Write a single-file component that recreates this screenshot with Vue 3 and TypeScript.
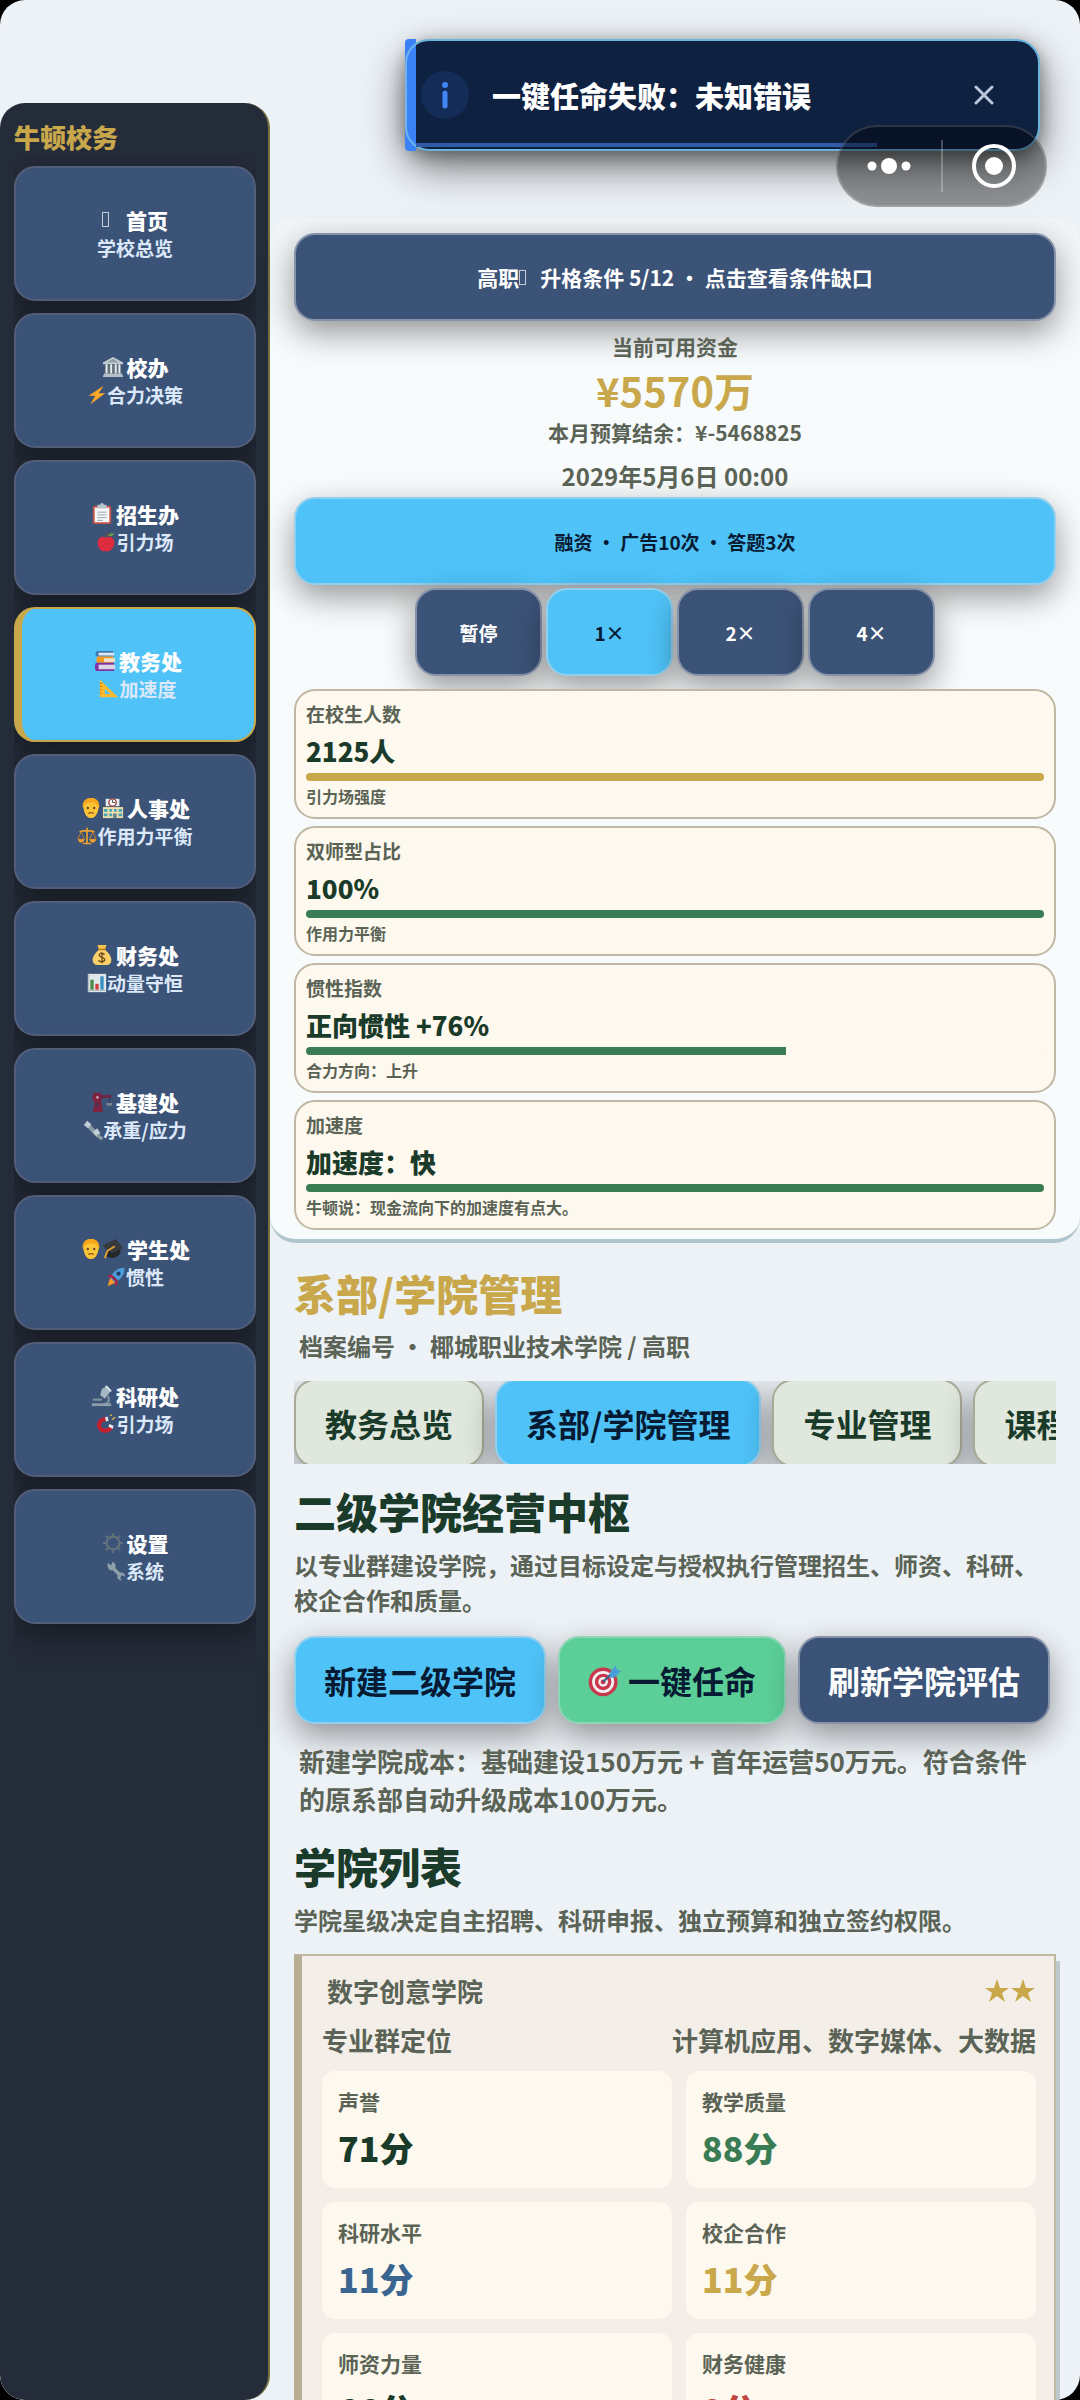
<script setup lang="ts">
import { ref } from 'vue'

interface NavItem {
  name: string
  hint: string
  icons: string[]
  hintIcon?: string
}
interface StatCard {
  label: string
  value: string
  note: string
  percent: number
  tone: string
}
interface Metric {
  label: string
  value: string
  tone: string
}

const person =
  '<path d="M3 10C3 4 7 1 12 1s9 3 9 9l-1 3c-1 6-4 10-8 10S5 19 4 13z" fill="#fcc535"/><path d="M3 10C3 4 7 1 12 1s9 3 9 9l-1 2c0-4-3-6-8-6s-8 2-8 6z" fill="#f7a61c"/><circle cx="8.500" cy="12" r="1.300" fill="#6b4523"/><circle cx="15.500" cy="12" r="1.300" fill="#6b4523"/><path d="M9 18q3-2 6 0" stroke="#8d5523" stroke-width="1.500" fill="none"/>'

const glyphs: Record<string, string> = {
  bank: '<path d="M12 1 23 7v2H1V7z" fill="#c3cdd1"/><path d="M12 3 19 7H5z" fill="#8fa0a8"/><path d="M3 9h18v10H3z" fill="#62737b"/><path d="M4 9h2v10H4zM9 9h2v10H9zM14 9h2v10h-2zM18 9h2v10h-2z" fill="#e8eef0"/><path d="M2 19h20v2H2zM1 21h22v2H1z" fill="#b4c0c5"/>',
  bolt: '<path d="M20 1 2 13h8L4 23 22 10h-8z" fill="#fda828"/>',
  clipboard:
    '<rect x="2" y="3" width="20" height="20" rx="2" fill="#c4544a"/><path d="M4 5h16v16H4z" fill="#f5f7f8"/><path d="M7 2h3a2 2 0 0 1 4 0h3v4H7z" fill="#b9c6cc"/><path d="M7 10h10M7 13h10M7 16h10M7 19h6" stroke="#90a4ae"/>',
  apple:
    '<path d="M12 7c4-3 10-1 10 6 0 5-4 10-7 10-2 0-4 0-6 0C5 23 2 18 2 13 2 6 8 4 12 7z" fill="#dd2c3e"/><path d="M12 7c0-3 1-5 3-6" stroke="#6d4c41" stroke-width="1.500" fill="none"/><path d="M14 4c3-3 6-3 8-2-2 3-5 4-8 2z" fill="#6b9e3b"/>',
  books:
    '<path d="M3 1h18v6H3q-3-3 0-6z" fill="#3d79b8"/><path d="M5 3h17v3H5z" fill="#dfe8ee"/><path d="M4 7h17v7H4q-3-3 0-7z" fill="#f59a22"/><path d="M11 9h12v4H11z" fill="#f2e4cc"/><path d="M2 14h20v9H2q-2-4 0-9z" fill="#8131a2"/><path d="M5 16h18v5H5z" fill="#d9d5e4"/>',
  ruler:
    '<path d="M1 1 23 22H1zM7 12v6h7z" fill="#fcb92d" fill-rule="evenodd"/><path d="M1 5h3M1 9h3M1 13h3M1 17h3" stroke="#c27c11"/>',
  school:
    '<path d="M4 2h15v8H4z" fill="#e7eef0"/><path d="M1 11h22v12H1z" fill="#f0dfa8"/><circle cx="11.500" cy="6" r="4" fill="#fff" stroke="#963f3f" stroke-width="1.500"/><path d="M11.500 3v3h3" stroke="#444" fill="none"/><path d="M2 13h4v3H2zM8 13h3v3H8zM13 13h3v3h-3zM18 13h4v3h-4zM2 18h4v3H2zM8 18h3v3H8zM18 18h4v3h-4z" fill="#48a6b8"/><path d="M12 18h4v5h-4z" fill="#6b8290"/>',
  scales:
    '<path d="M12 2v18M3 7q9-3 18 0M7 21h10" stroke="#eda02e" stroke-width="2" fill="none"/><path d="M5 7 1 16h8zM19 7l-4 9h8z" fill="none" stroke="#d98a20"/><path d="M1 16h8q-1 4-4 4t-4-4zM15 16h8q-1 4-4 4t-4-4z" fill="#eda02e"/>',
  money:
    '<path d="M7 1h10l-2 6H9z" fill="#f5c04a"/><path d="M9 6h6c5 4 8 9 7 13-1 4-4 4-10 4S3 23 2 19C1 15 4 10 9 6z" fill="#fad06b"/><path d="M8 6h8" stroke="#b47a17" stroke-width="1.500"/><path d="M15 11q-6-2-6 1c0 3 6 2 6 5s-5 3-7 1M12 9v12" stroke="#6b4c1b" stroke-width="1.500" fill="none"/>',
  chart:
    '<rect x="1" y="1" width="22" height="22" fill="#dfe7ea"/><path d="M4 8h4v12H4z" fill="#4e8b47"/><path d="M10 13h4v7h-4z" fill="#cf3f3f"/><path d="M16 4h4v16h-4z" fill="#3390c4"/><path d="M1 21h22M2 1v22" stroke="#a5b5bb"/>',
  crane:
    '<path d="M3 2h7l3 4-2 5 2 12H2l2-10-3-5z" fill="#7e2440"/><path d="M8 5 21 4l2 3-13 1z" fill="#6e2440"/><path d="M20 7v6" stroke="#3b2c48"/><path d="M17 13h6v3h-6z" fill="#7e8590"/><path d="M5 13h4v4H5z" fill="#54314f"/><circle cx="7" cy="7" r="1.500" fill="#c9a0aa"/>',
  bolts:
    '<path d="M5 5 16 17" stroke="#8b9da5" stroke-width="5"/><path d="M1 6 5 1l5 4-4 5zM12 14l5-4 4 6-5 4z" fill="#c2cfd4"/><path d="M17 18l6 5" stroke="#8b9da5" stroke-width="4"/>',
  cap: '<path d="M1 8 15 1l8 10-12 8z" fill="#34393e"/><path d="M5 12v8q8 5 15-3v-5l-9 5z" fill="#24282c"/><path d="M14 9 6 14l-3 8" stroke="#e6a62b" stroke-width="2" fill="none"/>',
  rocket:
    '<path d="M22 1c1 8-5 14-11 18l-6-6C8 6 14 1 22 1z" fill="#4b9ddb"/><path d="M8 9 2 10l3 4zM14 16l-1 7-4-4z" fill="#b11f45"/><path d="M5 13l6 6-9 4z" fill="#f79a28"/><circle cx="15" cy="8" r="2.500" fill="#213f66"/><path d="M7 11l6 6" stroke="#952044" stroke-width="3"/>',
  microscope:
    '<path d="M12 4l6-3 4 5-7 9-5-4z" fill="#a5b8c1"/><path d="M16 1l6 6" stroke="#dbe4e8" stroke-width="2"/><path d="M18 12c4 5 0 9-5 9M2 16h10" stroke="#78909c" stroke-width="2.500" fill="none"/><path d="M1 20h21v3H1z" fill="#8da0aa"/>',
  magnet:
    '<path d="M12 6C0 7 2 20 11 20c4 0 6-2 7-4" stroke="#c4202f" stroke-width="5" fill="none"/><path d="M11 4l3-1 1 5-3 1zM15 15l1-3 5 2-1 4z" fill="#e5ecef"/><path d="M17 2l2-1M19 7l4-3" stroke="#f0bd35" stroke-width="1.500"/>',
  gear: '<circle cx="12" cy="12" r="7" fill="none" stroke="#62727b" stroke-width="2.500"/><path d="M12 1v4M12 19v4M1 12h4M19 12h4M4 4l3 3M17 17l3 3M20 4l-3 3M7 17l-3 3" stroke="#62727b" stroke-width="2"/>',
  wrench:
    '<path d="M2 2l4 3 2-4c4 2 4 5 3 7l6 6c3-1 6 1 6 5l-4-2-2 3 2 3c-5 0-6-3-5-6L8 11C4 12 1 8 2 2z" fill="#8d9fa8"/>',
  target:
    '<circle cx="11" cy="13" r="10.500" fill="#c9374c"/><circle cx="11" cy="13" r="8" fill="#f3f1f1"/><circle cx="11" cy="13" r="6" fill="#c9374c"/><circle cx="11" cy="13" r="3.500" fill="#f3f1f1"/><circle cx="11" cy="13" r="1.800" fill="#c9374c"/><path d="M11 13 19 5" stroke="#33628d" stroke-width="1.500"/><path d="M16 6l4-5 1 3 3 1-5 5h-3z" fill="#4a9ed8"/>',
  person,
}

const navItems: NavItem[] = [
  { name: '首页', hint: '学校总览', icons: [] },
  { name: '校办', hint: '合力决策', icons: ['bank'], hintIcon: 'bolt' },
  { name: '招生办', hint: '引力场', icons: ['clipboard'], hintIcon: 'apple' },
  { name: '教务处', hint: '加速度', icons: ['books'], hintIcon: 'ruler' },
  { name: '人事处', hint: '作用力平衡', icons: ['person', 'school'], hintIcon: 'scales' },
  { name: '财务处', hint: '动量守恒', icons: ['money'], hintIcon: 'chart' },
  { name: '基建处', hint: '承重/应力', icons: ['crane'], hintIcon: 'bolts' },
  { name: '学生处', hint: '惯性', icons: ['person', 'cap'], hintIcon: 'rocket' },
  { name: '科研处', hint: '引力场', icons: ['microscope'], hintIcon: 'magnet' },
  { name: '设置', hint: '系统', icons: ['gear'], hintIcon: 'wrench' },
]
const activeNav = ref(3)

const speeds = ['暂停', '1×', '2×', '4×']
const speed = ref(1)

const stats: StatCard[] = [
  { label: '在校生人数', value: '2125人', note: '引力场强度', percent: 100, tone: 'gold' },
  { label: '双师型占比', value: '100%', note: '作用力平衡', percent: 100, tone: 'green' },
  { label: '惯性指数', value: '正向惯性 +76%', note: '合力方向：上升', percent: 65, tone: 'green' },
  { label: '加速度', value: '加速度：快', note: '牛顿说：现金流向下的加速度有点大。', percent: 100, tone: 'green' },
]

const tabs = ['教务总览', '系部/学院管理', '专业管理', '课程管理']
const activeTab = ref(1)

const metrics: Metric[] = [
  { label: '声誉', value: '71分', tone: 'dark' },
  { label: '教学质量', value: '88分', tone: 'green' },
  { label: '科研水平', value: '11分', tone: 'blue' },
  { label: '校企合作', value: '11分', tone: 'gold' },
  { label: '师资力量', value: '66分', tone: 'dark' },
  { label: '财务健康', value: '0分', tone: 'red' },
]

const toastOpen = ref(true)
</script>

<template>
  <div class="app">
    <aside class="sidebar">
      <h1 class="brand">牛顿校务</h1>
      <nav class="nav">
        <button
          v-for="(item, i) in navItems"
          :key="item.name"
          type="button"
          class="nav-btn"
          :class="{ active: i === activeNav }"
          @click="activeNav = i"
        >
          <span class="nav-name">
            <i v-if="!item.icons.length" class="missing"></i>
            <svg v-for="g in item.icons" :key="g" class="emoji" viewBox="0 0 24 24" v-html="glyphs[g]"></svg>
            <span class="nav-label">{{ item.name }}</span>
          </span>
          <span class="nav-hint">
            <svg v-if="item.hintIcon" class="emoji small" viewBox="0 0 24 24" v-html="glyphs[item.hintIcon]"></svg>
            <span>{{ item.hint }}</span>
          </span>
        </button>
      </nav>
    </aside>

    <main class="main">
      <header class="panel">
        <button type="button" class="btn navy wide-btn upgrade">
          <span>高职</span><i class="missing"></i><span>升格条件 5/12 · 点击查看条件缺口</span>
        </button>
        <div class="funds">
          <p class="funds-label">当前可用资金</p>
          <p class="funds-amount">¥5570万</p>
          <p class="funds-balance">本月预算结余：¥-5468825</p>
          <time class="date" datetime="2029-05-06T00:00">2029年5月6日 00:00</time>
        </div>
        <button type="button" class="btn sky wide-btn finance">融资 · 广告10次 · 答题3次</button>
        <div class="speeds">
          <button
            v-for="(s, i) in speeds"
            :key="s"
            type="button"
            class="btn speed"
            :class="i === speed ? 'sky' : 'navy'"
            @click="speed = i"
          >
            {{ s }}
          </button>
        </div>
        <div class="stats">
          <section v-for="s in stats" :key="s.label" class="stat">
            <p class="stat-label">{{ s.label }}</p>
            <p class="stat-value">{{ s.value }}</p>
            <div class="track"><div class="fill" :class="s.tone" :style="{ width: s.percent + '%' }"></div></div>
            <p class="stat-note">{{ s.note }}</p>
          </section>
        </div>
      </header>

      <div class="content">
        <h2 class="title gold-text">系部/学院管理</h2>
        <p class="archive">档案编号 · 椰城职业技术学院 / 高职</p>
        <div class="tabs">
          <button
            v-for="(t, i) in tabs"
            :key="t"
            type="button"
            class="btn tab"
            :class="i === activeTab ? 'sky' : 'pale'"
            @click="activeTab = i"
          >
            {{ t }}
          </button>
        </div>

        <h2 class="title hub">二级学院经营中枢</h2>
        <p class="desc">以专业群建设学院，通过目标设定与授权执行管理招生、师资、科研、校企合作和质量。</p>
        <div class="actions">
          <button type="button" class="btn action sky">新建二级学院</button>
          <button type="button" class="btn action mint">
            <svg class="target" viewBox="0 0 24 24" v-html="glyphs.target"></svg><span>一键任命</span>
          </button>
          <button type="button" class="btn action navy">刷新学院评估</button>
        </div>
        <p class="cost">新建学院成本：基础建设150万元 + 首年运营50万元。符合条件的原系部自动升级成本100万元。</p>

        <h2 class="title list-title">学院列表</h2>
        <p class="desc">学院星级决定自主招聘、科研申报、独立预算和独立签约权限。</p>
        <article class="college">
          <div class="row name-row">
            <h3>数字创意学院</h3>
            <span class="stars" aria-label="二星">
              <svg v-for="n in 2" :key="n" viewBox="0 0 26 26">
                <path d="M13 1l3 9h9l-7 5 3 9-8-6-8 6 3-9-7-5h9z" fill="#c9a84c" />
              </svg>
            </span>
          </div>
          <div class="row focus-row"><span>专业群定位</span><span>计算机应用、数字媒体、大数据</span></div>
          <div class="metrics">
            <div v-for="m in metrics" :key="m.label" class="metric">
              <p class="metric-label">{{ m.label }}</p>
              <p class="metric-value" :class="m.tone">{{ m.value }}</p>
            </div>
          </div>
        </article>
      </div>
    </main>

    <div v-if="toastOpen" class="toast" role="alert">
      <span class="accent"></span>
      <svg class="info" viewBox="0 0 48 48">
        <circle cx="24" cy="24" r="24" fill="#132d58" />
        <circle cx="24" cy="14" r="3" fill="#4285f4" />
        <path d="M24 22v13" stroke="#4285f4" stroke-width="5" stroke-linecap="round" />
      </svg>
      <p class="toast-text">一键任命失败：未知错误</p>
      <button type="button" class="close" aria-label="关闭" @click="toastOpen = false">
        <svg viewBox="0 0 20 20"><path d="M2 2l16 16M18 2L2 18" stroke="#b9c6dc" stroke-width="3" stroke-linecap="round" /></svg>
      </button>
      <span class="progress"></span>
    </div>

    <div class="capsule">
      <button type="button" aria-label="更多">
        <svg width="48" height="24" viewBox="0 0 48 24" fill="#fff">
          <circle cx="7" cy="12" r="4.500" /><circle cx="24" cy="12" r="8" /><circle cx="41" cy="12" r="4.500" />
        </svg>
      </button>
      <span class="divider"></span>
      <button type="button" aria-label="关闭小程序">
        <svg width="44" height="44" viewBox="0 0 44 44">
          <circle cx="22" cy="22" r="20" fill="none" stroke="#fff" stroke-width="4" /><circle cx="22" cy="22" r="9" fill="#fff" />
        </svg>
      </button>
    </div>
  </div>
</template>

<style>
body {
  margin: 0;
  background: #000;
}
</style>

<style scoped>
* {
  box-sizing: border-box;
}
h1, h2, h3, p {
  margin: 0;
  font-weight: inherit;
}
button {
  font: inherit;
  padding: 0;
  cursor: pointer;
}
svg {
  display: block;
  flex: none;
}
.app {
  position: relative;
  display: flex;
  height: 100vh;
  overflow: hidden;
  border-radius: 25px;
  background: #edf2f7;
  font-family: "Noto Sans CJK SC", "Noto Sans", sans-serif;
  font-weight: 700;
  color: #5a6355;
}

/* sidebar */
.sidebar {
  display: flex;
  flex-direction: column;
  flex: none;
  width: 25%;
  margin-top: 103px;
  padding: 15px 12px 0 14px;
  background: #252c39;
  border-right: 2px solid #77703f;
  border-radius: 25px;
  overflow: hidden;
}
.brand {
  font-size: 26px;
  font-weight: 900;
  line-height: 38px;
  color: #c9a84c;
}
.nav {
  display: flex;
  flex-direction: column;
  flex: 1;
  gap: 12px;
  padding-top: 10px;
  overflow: hidden;
}
.nav-btn {
  display: flex;
  flex-direction: column;
  flex: none;
  align-items: center;
  justify-content: center;
  height: 135px;
  border: 2px solid #535f7a;
  border-radius: 21px;
  background: #3c5378;
  box-shadow: 0 12px 32px rgba(0, 0, 0, 0.4);
  color: #fff;
}
.nav-btn.active {
  border-color: #c9a84c;
  border-left-width: 8px;
  background: #4fc3f8;
}
.nav-name,
.nav-hint {
  display: flex;
  align-items: center;
  height: 28px;
  font-size: 21px;
  line-height: 28px;
}
.nav-name {
  font-weight: 900;
}
.nav-hint {
  font-size: 19px;
  color: #dbe8f9;
}
.nav-label {
  margin-left: 3px;
}
.emoji {
  width: 22px;
  height: 22px;
}
.emoji.small {
  width: 20px;
  height: 20px;
}
.missing {
  flex: none;
  width: 7px;
  height: 15px;
  margin-right: 14px;
  border: 1px solid currentColor;
  opacity: 0.7;
}

/* shared buttons */
.btn {
  display: flex;
  flex: none;
  align-items: center;
  justify-content: center;
  height: 88px;
  border: 2px solid;
  border-radius: 21px;
  box-shadow: 0 12px 32px rgba(0, 0, 0, 0.4);
  white-space: nowrap;
}
.navy {
  background: #3c5378;
  border-color: #8692a9;
  color: #fff;
}
.sky {
  background: #4fc3f8;
  border-color: #92cfee;
  color: #061a33;
}
.mint {
  background: #5bcf97;
  border-color: #8fd5b8;
  color: #061a33;
}
.pale {
  background: #e0e8de;
  border-color: #aaa995;
  color: #1a3a2a;
}
.wide-btn {
  width: 100%;
}

/* header panel */
.main {
  flex: 1;
  min-width: 0;
  padding-top: 218px;
}
.panel {
  padding: 15px 24px 9px;
  border-bottom: 4px solid #b0c4ce;
  border-radius: 26px;
  background: linear-gradient(#f1f5f8, #f8fbfc 160px);
}
.upgrade {
  font-size: 21px;
}
.finance,
.speed {
  font-size: 19px;
}
.funds {
  display: flex;
  flex-direction: column;
  align-items: center;
  padding: 10px 0 2px;
}
.funds-label {
  font-size: 21px;
  line-height: 30px;
}
.funds-amount {
  font-size: 40px;
  line-height: 58px;
  color: #c9a84c;
}
.funds-balance {
  font-size: 21px;
  line-height: 26px;
}
.date {
  margin-top: 12px;
  font-size: 24px;
  line-height: 38px;
}
.speeds {
  display: flex;
  justify-content: center;
  gap: 4px;
  margin-top: 3px;
}
.speed {
  width: 127px;
}
.stats {
  display: flex;
  flex-direction: column;
  gap: 7px;
  margin-top: 13px;
}
.stat {
  position: relative;
  padding: 9px 10px 10px;
  border: 2px solid #c0b8a4;
  border-radius: 21px;
  background: #fef9ee;
}
.stat-label {
  font-size: 19px;
  line-height: 28px;
}
.stat-value {
  margin: 5px 0 4px;
  font-size: 26px;
  font-weight: 900;
  line-height: 36px;
  color: #1a3a2a;
}
.track {
  height: 8px;
  border-radius: 4px;
  background: #fdf8f0;
  overflow: hidden;
}
.fill {
  height: 100%;
}
.fill.gold {
  background: #c9a84c;
}
.fill.green {
  background: #3a7d55;
}
.stat-note {
  margin-top: 4px;
  font-size: 16px;
  line-height: 22px;
}

/* content */
.content {
  padding: 22px 24px 0;
}
.title {
  font-size: 42px;
  font-weight: 900;
  line-height: 56px;
  color: #1a3a2a;
}
.title.gold-text {
  color: #c9a84c;
}
.archive {
  margin-top: 7px;
  padding-left: 5px;
  font-size: 24px;
  line-height: 36px;
}
.tabs {
  display: flex;
  align-items: center;
  gap: 11px;
  height: 83px;
  margin-top: 17px;
  overflow: hidden;
}
.tab {
  padding: 0 29px;
  font-size: 32px;
}
.action {
  padding: 0 28px;
  font-size: 32px;
}
.hub {
  margin-top: 19px;
}
.desc {
  margin-top: 8px;
  font-size: 24px;
  line-height: 35px;
}
.actions {
  display: flex;
  gap: 12px;
  margin-top: 19px;
}
.target {
  width: 33px;
  height: 33px;
  margin-right: 7px;
}
.cost {
  margin-top: 18px;
  padding: 0 16px 0 5px;
  font-size: 26px;
  line-height: 38px;
}
.list-title {
  margin-top: 20px;
}
.college {
  margin-top: 17px;
  padding: 15px 18px 24px 20px;
  border: 2px solid #c0b8a0;
  border-left: 8px solid #b8ae94;
  background: #f3eee8;
  box-shadow: 4px 7px 0 #bdc8cc;
}
.row {
  display: flex;
  align-items: center;
  justify-content: space-between;
  font-size: 26px;
  line-height: 40px;
}
.name-row {
  padding-left: 5px;
}
.name-row h3 {
  font-size: 26px;
}
.stars {
  display: flex;
}
.stars svg {
  width: 26px;
  height: 26px;
}
.focus-row {
  margin-top: 9px;
}
.metrics {
  display: grid;
  grid-template-columns: 1fr 1fr;
  gap: 14px;
  margin-top: 11px;
}
.metric {
  height: 117px;
  padding: 14px 16px;
  border-radius: 13px;
  background: #fef9ee;
}
.metric-label {
  font-size: 21px;
  line-height: 32px;
}
.metric-value {
  margin-top: 9px;
  font-size: 34px;
  font-weight: 900;
  line-height: 44px;
}
.metric-value.dark {
  color: #1a3a2a;
}
.metric-value.green {
  color: #3a7d55;
}
.metric-value.blue {
  color: #3a6591;
}
.metric-value.gold {
  color: #c9a84c;
}
.metric-value.red {
  color: #c0453c;
}

/* toast */
.toast {
  position: absolute;
  top: 39px;
  right: 40px;
  display: flex;
  align-items: center;
  width: 635px;
  height: 112px;
  padding: 0 44px 0 14px;
  border: 2px solid #69b3dc;
  border-radius: 24px;
  background: #0f2141;
  box-shadow: 0 16px 40px rgba(0, 0, 0, 0.55), 0 4px 16px rgba(0, 0, 0, 0.3);
}
.accent {
  position: absolute;
  top: -2px;
  bottom: -2px;
  left: -2px;
  width: 11px;
  border-radius: 4px 0 0 4px;
  background: #3b82f6;
  overflow: hidden;
}
.accent::after {
  content: "";
  position: absolute;
  top: 0;
  bottom: 0;
  left: 0;
  width: 48px;
  border: 2px solid #6fb4ee;
  border-right: 0;
  border-radius: 24px 0 0 24px;
}
.info {
  width: 48px;
  height: 48px;
}
.toast-text {
  flex: 1;
  margin-left: 23px;
  font-size: 29px;
  font-weight: 900;
  line-height: 42px;
  color: #fff;
}
.close {
  border: 0;
  background: none;
}
.close svg {
  width: 20px;
  height: 20px;
}
.progress {
  position: absolute;
  bottom: 2px;
  left: 9px;
  width: 73%;
  height: 4px;
  background: #315ba6;
}

/* floating capsule */
.capsule {
  position: absolute;
  top: 125px;
  right: 33px;
  display: flex;
  align-items: center;
  width: 211px;
  height: 82px;
  border: 2px solid rgba(255, 255, 255, 0.15);
  border-radius: 41px;
  background: rgba(0, 0, 0, 0.4);
}
.capsule button {
  display: flex;
  flex: 1;
  align-items: center;
  justify-content: center;
  height: 100%;
  border: 0;
  background: none;
}
.divider {
  width: 2px;
  height: 52px;
  background: rgba(255, 255, 255, 0.25);
}
</style>
